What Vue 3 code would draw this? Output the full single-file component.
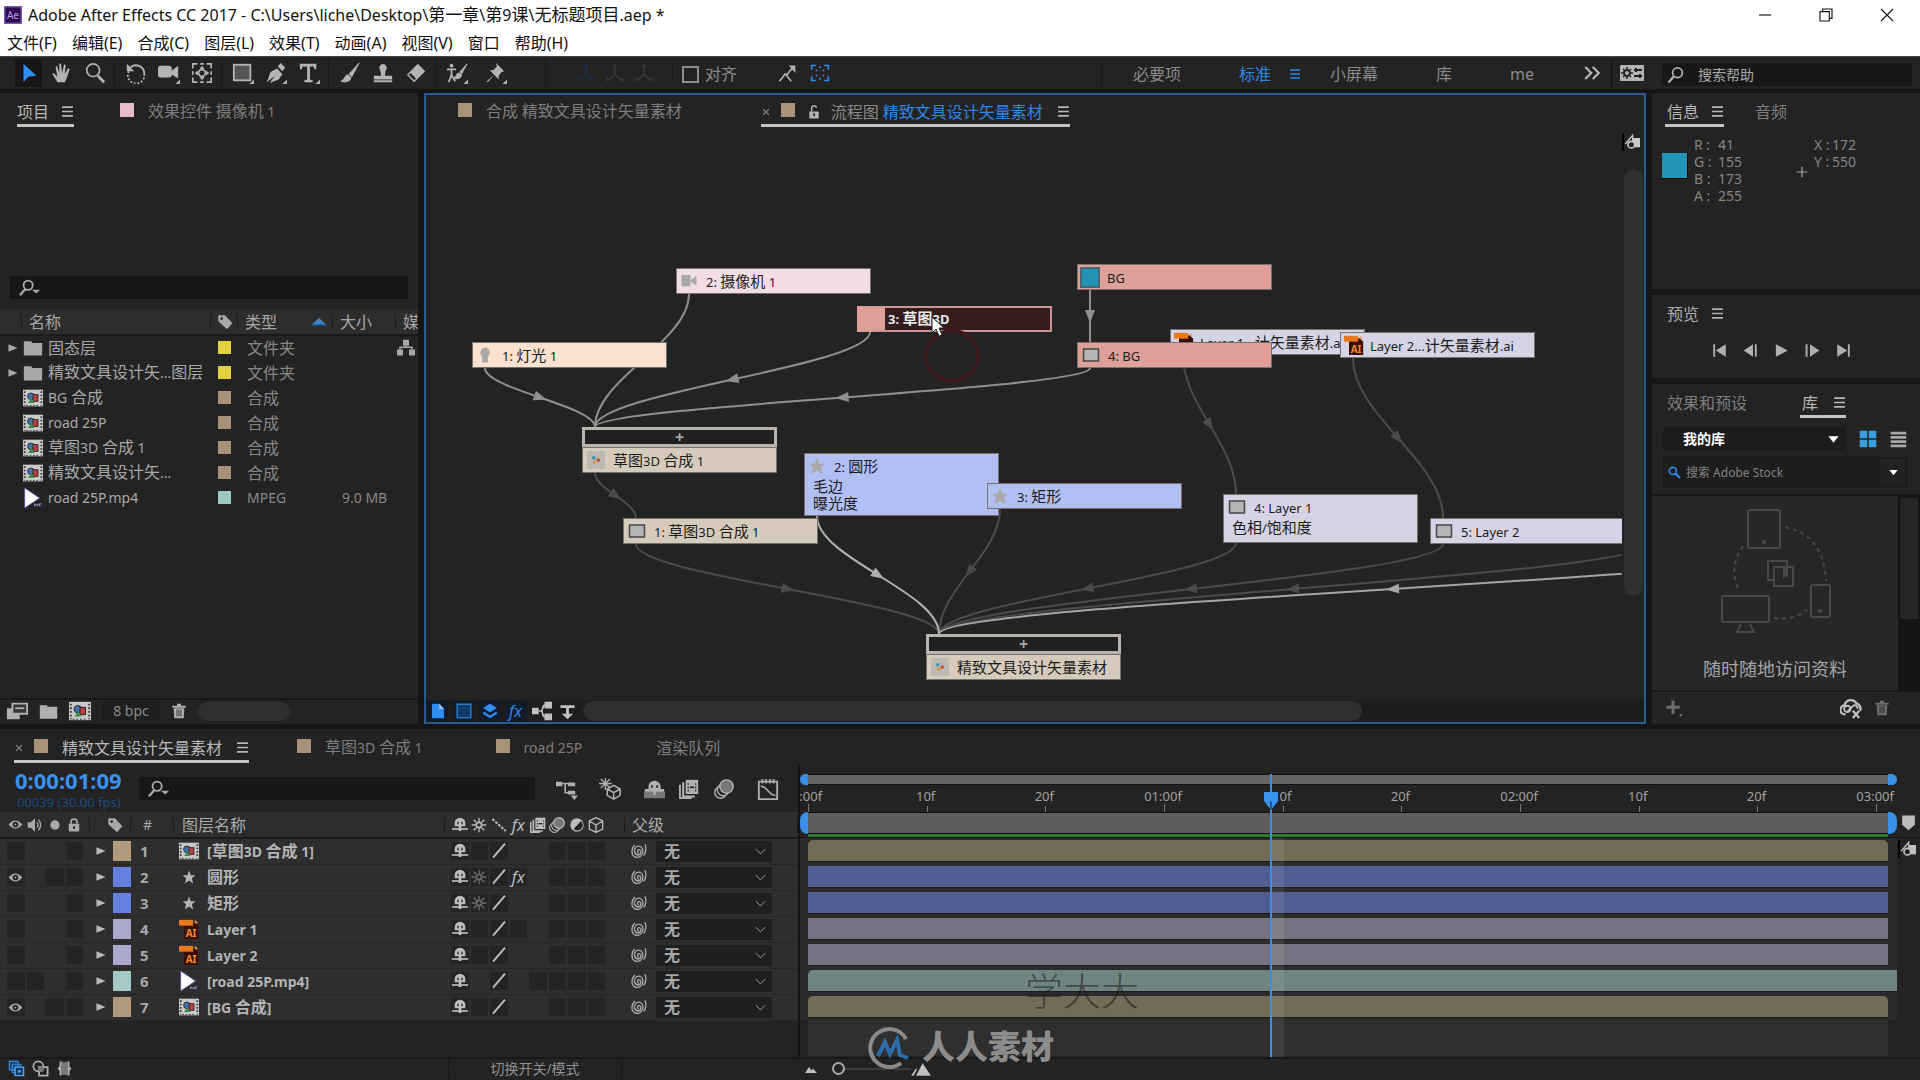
<script setup>
import { h } from 'vue'

const film = '<rect x="0" y="2" width="24" height="20" fill="#c9c9c9"/><path d="M2 4v17M22 4v17" stroke="#333" stroke-width="2" stroke-dasharray="2 2"/><path d="M4 21h16" stroke="#333" stroke-dasharray="2 2"/><circle cx="9.500" cy="10" r="4" fill="#3f74ad" stroke="#222"/><rect x="12" y="8" width="6" height="8" fill="#b5403c" stroke="#222"/><path d="M6 18l4-6 4 6z" fill="#3c8a4d"/>'
const shapes = {
  ae: '<rect width="24" height="24" fill="#7a55b5"/><rect x="2" y="2" width="20" height="20" fill="#2a0a4a"/>',
  arrow: '<path d="M6 2v20l5-6 9-1z" fill="#2f8df0"/>',
  hand: '<path d="M7 22L2 14c-1-2 1-3 2-1l3 3L5 6c0-2 2-2 2 0l2 6L9 3c0-2 2-2 2 0l1 9 2-8c0-2 2-1 2 0l-1 9 3-5c1-2 3-1 2 1l-3 9-2 4z" fill="currentColor"/>',
  zoom: '<circle cx="10" cy="9" r="7" fill="none" stroke="currentColor" stroke-width="1.800"/><path d="M15 15l7 7" stroke="currentColor" stroke-width="3"/>',
  rotate: '<path d="M6 6a9 9 0 0 1 15 7" fill="none" stroke="currentColor" stroke-width="2"/><path d="M21 13a9 9 0 1 1-16-4" fill="none" stroke="currentColor" stroke-width="2" stroke-dasharray="2 2"/><path d="M2 2v8h8z" fill="currentColor"/>',
  camera: '<rect x="0" y="4" width="15" height="13" rx="3" fill="currentColor"/><path d="M14 10l8-6v14l-8-5z" fill="currentColor"/><path d="M24 19v5h-5z" fill="currentColor"/>',
  cam: '<rect x="2" y="4" width="12" height="15" rx="1" fill="currentColor"/><path d="M14 11l8-6v13l-8-5z" fill="currentColor"/>',
  anchor: '<path d="M2 7V2h5M17 2h5v5M22 17v5h-5M7 22H2v-5M10 2h4M10 22h4M2 10v4M22 10v4" fill="none" stroke="currentColor" stroke-width="1.800"/><circle cx="12" cy="12" r="3.500" fill="none" stroke="currentColor" stroke-width="1.500"/><path d="M12 4l3 4H9zM12 20l3-4H9zM4 12l4-3v6zM20 12l-4-3v6z" fill="currentColor"/>',
  rect: '<rect x="2" y="3" width="18" height="17" fill="#555" stroke="currentColor" stroke-width="2"/><path d="M24 19v5h-5z" fill="currentColor"/>',
  pen: '<path d="M2 22l4-11 7-4 6 6-4 6-10 4 6-8z" fill="currentColor"/><path d="M14 5l3-4 5 5-3 4z" fill="currentColor"/><path d="M24 19v5h-5z" fill="currentColor"/>',
  type: '<path d="M2 2h18v6h-2l-1-3h-4v14l3 1v2H7v-2l3-1V5H5L4 8H2z" fill="currentColor"/><path d="M24 19v5h-5z" fill="currentColor"/>',
  brush: '<path d="M22 1L11 13l3 3zM10 14c-4 0-3 5-8 7 5 2 11 0 11-4z" fill="currentColor" stroke="currentColor"/>',
  stamp: '<path d="M9 9a4 4 0 1 1 6 0l-1 6h8v4H2v-4h8zM2 20h20v2H2z" fill="currentColor"/>',
  eraser: '<path d="M14 2l8 8-12 12-8-8z" fill="currentColor"/><path d="M6 12l6 6-2 2-6-6z" fill="#232323"/>',
  roto: '<circle cx="6" cy="4" r="2" fill="currentColor"/><path d="M1 8h10M6 7v7l-3 8M6 14l4 7" fill="none" stroke="currentColor" stroke-width="2"/><path d="M23 2l-8 9 2 2zM14 12c-3 0-2 4-6 6 4 1 9 0 9-4z" fill="currentColor" stroke="currentColor"/><path d="M24 19v5h-5z" fill="currentColor"/>',
  pin: '<path d="M12 1l9 9-3 1-3 4v4l-5-5-7 8-1-1 8-7-5-5h4l4-4z" fill="currentColor"/><path d="M24 19v5h-5z" fill="currentColor"/>',
  axis: '<path d="M12 2v12l-9 7M12 14l9 7" fill="none" stroke="currentColor" stroke-width="2"/><path d="M12 0l3 5H9zM1 22l2-5 3 4zM23 22l-5-1 3-4z" fill="currentColor"/>',
  snap: '<path d="M3 22l7-9 7 9M12 14l7-9" fill="none" stroke="currentColor" stroke-width="2"/><path d="M14 3h8v9z" fill="currentColor"/>',
  focus: '<path d="M2 8V3h5M17 3h5v5M22 16v5h-5M7 21H2v-5" fill="none" stroke="currentColor" stroke-width="2"/><path d="M7 8h2v2H7zM15 8h2v2h-2zM7 14h2v2H7zM15 14h2v2h-2zM11 4h2v2h-2zM11 18h2v2h-2z" fill="currentColor"/>',
  menu: '<path d="M2 4h20M2 12h20M2 20h20" stroke="currentColor" stroke-width="3"/>',
  more: '<path d="M3 4l8 8-8 8M13 4l8 8-8 8" fill="none" stroke="currentColor" stroke-width="3"/>',
  settings: '<rect x="0" y="4" width="24" height="16" rx="1" fill="currentColor"/><circle cx="7" cy="12" r="3" fill="none" stroke="#222" stroke-width="2"/><path d="M7 6v2M7 16v2M1 12h2M11 12h2M3 8l1 1M10 15l1 1M3 16l1-1M10 9l1-1" stroke="#222" stroke-width="1.500"/><path d="M14 9h8M14 15h8M16 7v4M20 13v4" stroke="#222" stroke-width="2"/>',
  find: '<circle cx="14" cy="9" r="6.500" fill="none" stroke="currentColor" stroke-width="2.200"/><path d="M9 14l-7 8" stroke="currentColor" stroke-width="3"/>',
  findDown: '<circle cx="10" cy="9" r="5" fill="none" stroke="currentColor" stroke-width="2"/><path d="M7 13l-6 7" stroke="currentColor" stroke-width="2.500"/><path d="M14 14h9l-4 4z" fill="currentColor"/>',
  lens: '<circle cx="9" cy="9" r="6.500" fill="none" stroke="currentColor" stroke-width="3"/><path d="M14 14l8 8" stroke="currentColor" stroke-width="4"/>',
  min: '<path d="M3 12h18" stroke="currentColor" stroke-width="1.700"/>',
  restore: '<path d="M3 7h14v14H3zM7 7V3h14v14h-4" fill="none" stroke="currentColor" stroke-width="1.700"/>',
  close: '<path d="M3 3l18 18M21 3L3 21" stroke="currentColor" stroke-width="1.700"/>',
  x: '<path d="M5 5l14 14M19 5L5 19" stroke="currentColor" stroke-width="3"/>',
  unlock: '<rect x="4" y="11" width="16" height="12" rx="1" fill="currentColor"/><path d="M8 11V6a4 4 0 0 1 8-1" fill="none" stroke="currentColor" stroke-width="2.500"/><path d="M12 14v5" stroke="#222" stroke-width="3"/>',
  lock: '<rect x="3" y="10" width="18" height="13" rx="1" fill="currentColor"/><path d="M7 10V6a5 4 0 0 1 10 0v4" fill="none" stroke="currentColor" stroke-width="3"/><path d="M12 14v5" stroke="#222" stroke-width="3"/>',
  tag: '<path d="M2 2h10l11 12-8 9L2 11z" fill="currentColor"/><circle cx="7" cy="7" r="2" fill="#2d2d2d"/>',
  up: '<path d="M1 16L12 6l11 10z" fill="#3f82c8"/><path d="M1 16h22v2H1z" fill="#164a86"/>',
  right: '<path d="M1 3l22 9L1 21z" fill="currentColor"/>',
  down: '<path d="M1 5h22L12 19z" fill="currentColor"/>',
  folder: '<path d="M1 4h9l1 2h12v15H1z" fill="currentColor"/>',
  comp: film,
  net: '<path d="M8 1h8v8H8zM0 14h8v8H0zM16 14h8v8h-8z" fill="currentColor"/><path d="M12 9v3M4 14v-3h16v3" fill="none" stroke="currentColor" stroke-width="2"/>',
  movie: '<path d="M2 0l18 12L2 24z" fill="#fff" stroke="#5b4fa8"/><path d="M13 18h11v5H13z" fill="#252540"/><path d="M14 22v-3l2 2 2-2v3M20 22v-3h2" stroke="#bbb" fill="none"/>',
  footage: '<path d="M1 9h14v12H1z" fill="currentColor"/><path d="M7 4h16v11H7z" fill="#333" stroke="currentColor" stroke-width="2"/><path d="M10 9h10" stroke="currentColor" stroke-width="2"/>',
  trash: '<path d="M2 4h20v3H2zM9 1h6v3H9z" fill="currentColor"/><path d="M4 8h16l-1 15H5z" fill="currentColor"/><path d="M9 10v10M12 10v10M15 10v10" stroke="#222" stroke-width="1.300"/>',
  page: '<path d="M3 1h11l7 8v14H3z" fill="#2f8df0"/><path d="M14 1v8h7z" fill="#9cc8f8"/>',
  square: '<rect x="3" y="3" width="18" height="18" fill="#123a68" stroke="#2b78c8" stroke-width="2"/>',
  stack: '<path d="M12 2l9 6-9 6-9-6z" fill="#2f8df0"/><path d="M3 14l9 6 9-6" fill="none" stroke="#2f8df0" stroke-width="3"/>',
  flow: '<path d="M0 8h8v8H0zM15 1h9v8h-9zM15 15h9v8h-9z" fill="currentColor"/><path d="M8 12h3c3 0 0-7 5-7M11 12c3 0 0 7 5 7" fill="none" stroke="currentColor" stroke-width="2"/>',
  tree: '<path d="M2 3h20v4H2zM4 15h16l-8 8zM10 7h4v10h-4z" fill="currentColor"/>',
  marker: '<path d="M13 6h11v14H13z" fill="currentColor"/><path d="M2 15L13 2v8" fill="none" stroke="currentColor" stroke-width="2"/><circle cx="11" cy="16" r="5" fill="#222" stroke="currentColor" stroke-width="2.500"/>',
  shield: '<path d="M3 2h18v13l-9 8-9-8z" fill="currentColor"/>',
  first: '<path d="M2 2h3v20H2zM22 2v20L6 12z" fill="currentColor"/>',
  prev: '<path d="M19 2h3v20h-3zM16 2v20L1 12z" fill="currentColor"/>',
  play: '<path d="M3 2l19 10L3 22z" fill="currentColor"/>',
  next: '<path d="M1 2h3v20H1zM8 2l15 10L8 22z" fill="currentColor"/>',
  last: '<path d="M19 2h3v20h-3zM2 2l16 10L2 22z" fill="currentColor"/>',
  grid: '<path d="M1 1h10v10H1zM13 1h10v10H13zM1 13h10v10H1zM13 13h10v10H13z" fill="#3aa0dc"/>',
  list: '<path d="M1 1h22v4H1zM1 7h22v4H1zM1 13h22v4H1zM1 19h22v4H1z" fill="currentColor"/>',
  plus: '<path d="M10 2h4v7h7v4h-7v7h-4v-7H3V9h7zM21 20h3v3h-3z" fill="currentColor"/>',
  cross: '<path d="M12 3v18M3 12h18" stroke="currentColor" stroke-width="2"/>',
  cloud: '<path d="M6 19a5 5 0 0 1-1-10 7 7 0 0 1 13-2 6 6 0 0 1 4 8" fill="none" stroke="currentColor" stroke-width="2.500"/><circle cx="8" cy="13" r="3.500" fill="none" stroke="currentColor" stroke-width="2"/><path d="M8 16l6-6a3 3 0 0 1 5 3" fill="none" stroke="currentColor" stroke-width="2"/><path d="M14 15l7 8M21 15l-7 8" stroke="currentColor" stroke-width="2.500"/>',
  miniflow: '<path d="M0 4h7v5H0zM13 5h8v4h-8zM13 14h8v4h-8zM16 19h8l-4 5z" fill="currentColor"/><path d="M7 6h7M10 6v10h4" fill="none" stroke="currentColor" stroke-width="1.700"/>',
  draft: '<path d="M7 0v13M0 6h14M2 1l10 10M12 1L2 11" stroke="currentColor" stroke-width="1.500"/><path d="M16 8l7 4v7l-7 4-7-4v-7zM9 12l7 4 7-4M16 16v7" fill="#222" stroke="currentColor" stroke-width="1.700"/>',
  shyAll: '<path d="M5 12V9a7 7 0 0 1 14 0v3z" fill="currentColor"/><path d="M0 14h24v8H0z" fill="#777"/><path d="M1 13h22M12 12v6" stroke="currentColor" stroke-width="3"/><path d="M8 7h2v3H8zM14 7h2v3h-2z" fill="#222"/>',
  shy: '<path d="M4 14V9a8 8 0 0 1 16 0v5h-6v7h-4v-7z" fill="currentColor"/><path d="M0 18h24" stroke="currentColor" stroke-width="2.500"/><path d="M8 7h2v4H8zM14 7h2v4h-2z" fill="#222"/>',
  blend: '<path d="M8 1h15v17H8z" fill="currentColor"/><path d="M5 4v17h14M1 7v16h14" fill="none" stroke="currentColor" stroke-width="2.500"/><path d="M11 5v10M20 5v10" stroke="#222" stroke-width="1.500" stroke-dasharray="2 2"/><path d="M13 10h5" stroke="#222" stroke-width="2"/>',
  blur: '<circle cx="8" cy="16" r="7" fill="#222" stroke="currentColor" stroke-width="1.700"/><circle cx="11" cy="13" r="7" fill="#222" stroke="currentColor" stroke-width="1.700"/><circle cx="15" cy="9" r="8" fill="#777" stroke="currentColor" stroke-width="1.700"/>',
  graph: '<path d="M2 4h20v19H2z" fill="none" stroke="currentColor" stroke-width="2"/><path d="M4 9c8 0 8 10 16 10M6 1v5M10 1v5M14 1v5M18 1v5" fill="none" stroke="currentColor" stroke-width="1.700"/>',
  eye: '<path d="M1 12q11-13 22 0q-11 13-22 0z" fill="currentColor"/><circle cx="12" cy="12" r="4.500" fill="#222"/><circle cx="12" cy="12" r="1.500" fill="currentColor"/>',
  sound: '<path d="M1 8h5l6-6v20l-6-6H1z" fill="currentColor"/><path d="M15 8q3 4 0 8M17 4q7 8 0 16" fill="none" stroke="currentColor" stroke-width="2"/>',
  dot: '<circle cx="12" cy="12" r="8" fill="currentColor"/>',
  sun: '<circle cx="12" cy="12" r="4" fill="none" stroke="currentColor" stroke-width="2.500"/><path d="M12 1v6M12 17v6M1 12h6M17 12h6M4 4l4 4M16 16l4 4M20 4l-4 4M4 20l4-4" stroke="currentColor" stroke-width="2"/>',
  slashDots: '<path d="M2 3l20 18" stroke="currentColor" stroke-width="3" stroke-dasharray="4 2"/>',
  slash: '<path d="M3 22L21 1" stroke="currentColor" stroke-width="3"/>',
  adjust: '<circle cx="12" cy="12" r="10" fill="currentColor"/><path d="M18 6a8 8 0 0 1-11 12z" fill="#222"/>',
  cube: '<path d="M12 1l10 5v12l-10 5-10-5V6zM2 6l10 6 10-6M12 12v11" fill="none" stroke="currentColor" stroke-width="2"/>',
  star: '<path d="M12 1l3 8h8l-6 5 2 9-7-5-7 5 2-9-6-5h8z" fill="currentColor"/>',
  spiral: '<path d="M12 15c-3 0-3-5 0-5 4 0 4 7-1 8-6 0-8-8-3-12 5-3 10 0 10 6 0 7-6 11-12 9-6-3-6-13 0-18M21 2c2 6 2 12-2 17" fill="none" stroke="currentColor" stroke-width="2"/>',
  chevron: '<path d="M2 7l10 10L22 7" fill="none" stroke="currentColor" stroke-width="2"/>',
  layersBlue: '<path d="M2 2h12v12H2zM6 6h12v12H6z" fill="#123a68" stroke="#3f8fe0" stroke-width="1.700"/><path d="M10 10h12v12H10z" fill="#123a68" stroke="#5aa8f0" stroke-width="2"/><circle cx="16" cy="16" r="2" fill="#5aa8f0"/>',
  modes: '<circle cx="9" cy="9" r="7" fill="none" stroke="currentColor" stroke-width="2.500"/><path d="M10 10h12v12H10z" fill="#222" stroke="currentColor" stroke-width="2.500"/><circle cx="13" cy="13" r="4" fill="#777"/>',
  braces: '<path d="M8 2H5v7l-3 3 3 3v7h3zM16 2h3v7l3 3-3 3v7h-3z" fill="currentColor"/><path d="M8 3h8v18H8z" fill="#777"/>',
  mount: '<path d="M0 20l8-12 5 7 3-4 8 9z" fill="currentColor"/>',
  mounts: '<path d="M6 20L14 5l10 15zM0 20l6-9 1 2-4 7z" fill="currentColor"/>',
  bulb: '<path d="M12 2a7 7 0 0 0-4 12v8h8v-8a7 7 0 0 0-4-12z" fill="currentColor"/>',
  solid: '<rect x="2" y="4" width="20" height="16" fill="#b4b4b4" stroke="#444" stroke-width="2"/>',
  compDot: '<rect width="24" height="24" fill="#bdb9b2"/><circle cx="9" cy="9" r="2.500" fill="#3f9bb0"/><circle cx="15" cy="12" r="2.500" fill="#c8503c"/><circle cx="10" cy="15" r="2" fill="#d8952c"/>'
}
const Ico = (p) => h('svg', { viewBox: '0 0 24 24', width: p.s || 20, height: p.s || 20, 'aria-hidden': 'true', innerHTML: shapes[p.n] })
Ico.props = ['n', 's']

// Latin runs are set one step smaller than the Chinese glyphs around them.
const Txt = (p) =>
  h('span', { class: 'runs' }, p.t.split(/([\x20-\x7e]+)/).filter(Boolean).map((r) => (/^[\x20-\x7e]/.test(r) ? h('span', { class: 'lat' }, r) : r)))
Txt.props = ['t']

const Ai = () => h('svg', { viewBox: '0 0 24 24', width: 20, height: 22, 'aria-hidden': 'true' }, [
  h('path', { d: 'M6 4h13l4 4v16H6z', fill: '#3a0f05' }),
  h('path', { d: 'M0 1h17v7H0z', fill: '#e8791d' }),
  h('path', { d: 'M19 1l4 4h-4z', fill: '#e8a060' }),
  h('text', { x: 8, y: 21, 'font-size': 12, 'font-weight': 700, fill: '#f08a2c' }, 'AI')
])

const menus = ['文件(F)', '编辑(E)', '合成(C)', '图层(L)', '效果(T)', '动画(A)', '视图(V)', '窗口', '帮助(H)']
const toolGroups = [
  ['arrow', 'hand', 'zoom'],
  ['rotate', 'camera', 'anchor'],
  ['rect', 'pen', 'type'],
  ['brush', 'stamp', 'eraser'],
  ['roto', 'pin']
]
const items = [
  { icon: 'folder', name: '固态层', color: '#e3d23f', type: '文件夹', size: '', twist: true },
  { icon: 'folder', name: '精致文具设计矢...图层', color: '#e3d23f', type: '文件夹', size: '', twist: true },
  { icon: 'comp', name: 'BG 合成', color: '#a8937a', type: '合成', size: '' },
  { icon: 'comp', name: 'road 25P', color: '#a8937a', type: '合成', size: '' },
  { icon: 'comp', name: '草图3D 合成 1', color: '#a8937a', type: '合成', size: '' },
  { icon: 'comp', name: '精致文具设计矢...', color: '#a8937a', type: '合成', size: '' },
  { icon: 'movie', name: 'road 25P.mp4', color: '#9fc8c0', type: 'MPEG', size: '9.0 MB' }
]

const nodes = [
  { x: 250, y: 138, h: 26, kind: 'pink', icon: 'cam', t: '2: 摄像机 1', pad: 1 },
  { x: 431, y: 176, h: 26, kind: 'editing', t: '3: 草图3D' },
  { x: 46, y: 212, h: 26, kind: 'peach', icon: 'bulb', t: '1: 灯光 1', pad: 1 },
  { x: 156, y: 317, h: 26, kind: 'tan', icon: 'compDot', t: '草图3D 合成 1', slot: 1 },
  { x: 197, y: 388, h: 26, kind: 'tan', icon: 'solid', t: '1: 草图3D 合成 1' },
  { x: 378, y: 323, h: 63, kind: 'blue', icon: 'star', t: '2: 圆形', pad: 1, fx: ['毛边', '曝光度'] },
  { x: 561, y: 353, h: 26, kind: 'blue', icon: 'star', t: '3: 矩形', pad: 1 },
  { x: 651, y: 134, h: 26, kind: 'red', icon: 'bg', t: 'BG' },
  { x: 744, y: 199, h: 26, kind: 'lav', icon: 'ai', t: 'Layer 1...计矢量素材.ai' },
  { x: 914, y: 202, h: 26, kind: 'lav', icon: 'ai', t: 'Layer 2...计矢量素材.ai' },
  { x: 651, y: 212, h: 26, kind: 'red', icon: 'solid', t: '4: BG' },
  { x: 797, y: 364, h: 49, kind: 'lav', icon: 'solid', t: '4: Layer 1', fx: ['色相/饱和度'] },
  { x: 1004, y: 388, h: 26, kind: 'lav', icon: 'solid', t: '5: Layer 2' },
  { x: 500, y: 524, h: 26, kind: 'tan', icon: 'compDot', t: '精致文具设计矢量素材', slot: 1 }
]
const dim = '#4b4b4b'
const mid = '#8f8f8f'
const edges = [
  [59, 238, 169, 297, mid], [263, 164, 169, 297, mid], [444, 202, 169, 297, mid], [664, 238, 169, 297, mid],
  [169, 343, 210, 388, dim], [210, 414, 513, 504, dim], [574, 379, 513, 504, dim],
  [810, 413, 513, 504, dim], [1017, 414, 513, 504, dim], [1221, 414, 513, 504, dim],
  [1421, 414, 513, 504, '#a5a5a5'], [391, 386, 513, 504, '#b0b0b0'],
  [664, 160, 664, 212, mid], [757, 225, 810, 364, dim], [927, 228, 1017, 388, dim]
].map(([x1, y1, x2, y2, c]) => {
  const k = (y2 - y1) * 0.36
  const a = (Math.atan2(y2 - y1 - k, x2 - x1) * 180) / Math.PI
  return { c, d: `M${x1} ${y1}C${x1} ${y1 + k} ${x2} ${y2 - k} ${x2} ${y2}`, t: `translate(${(x1 + x2) / 2} ${(y1 + y2) / 2}) rotate(${a})` }
})

const layers = [
  { av: 'b--b', color: '#b09c7c', icon: 'comp', name: '[草图3D 合成 1]', sw: 'sb/--bbb', bar: 'tan' },
  { av: 'e-bb', color: '#6680e0', icon: 'star', name: '圆形', sw: 'so/f-bbb', bar: 'blue' },
  { av: 'b--b', color: '#6680e0', icon: 'star', name: '矩形', sw: 'so/--bbb', bar: 'blue' },
  { av: 'b--b', color: '#aaa9cb', icon: 'ai', name: 'Layer 1', sw: 'sb/b-bbb', bar: 'lav' },
  { av: 'b--b', color: '#aaa9cb', icon: 'ai', name: 'Layer 2', sw: 'sb/--bbb', bar: 'lav' },
  { av: 'bb-b', color: '#a5c9c6', icon: 'movie', name: '[road 25P.mp4]', sw: 's-/-bbbb', bar: 'teal' },
  { av: 'e-bb', color: '#b09c7c', icon: 'comp', name: '[BG 合成]', sw: 'sb/--bbb', bar: 'tan' }
]
const switchIcon = { s: 'shy', o: 'sun', '/': 'slash', e: 'eye' }
const ticks = ['0:00f', '10f', '20f', '01:00f', '10f', '20f', '02:00f', '10f', '20f', '03:00f']
const playhead = (39 / 91) * 100
const transport = [['first', '第一帧'], ['prev', '上一帧'], ['play', '播放'], ['next', '下一帧'], ['last', '最后一帧']]
</script>

<template>
  <div class="app">
    <header class="title">
      <span class="logo"><Ico n="ae" s="18" /><b>Ae</b></span>
      <h1><Txt t="Adobe After Effects CC 2017 - C:\Users\liche\Desktop\第一章\第9课\无标题项目.aep *" /></h1>
      <div class="win">
        <button aria-label="最小化"><Ico n="min" s="16" /></button>
        <button aria-label="还原"><Ico n="restore" s="16" /></button>
        <button aria-label="关闭"><Ico n="close" s="16" /></button>
      </div>
    </header>
    <nav class="menus"><button v-for="m in menus" :key="m">{{ m }}</button></nav>

    <div class="tools">
      <div v-for="(g, i) in toolGroups" :key="i" class="group">
        <button v-for="t in g" :key="t" :class="['tool', t]" :aria-label="t"><Ico :n="t" s="22" /></button>
      </div>
      <div class="axes"><Ico n="axis" s="20" class="first" /><Ico n="axis" s="20" /><Ico n="axis" s="20" /></div>
      <label class="snap"><input type="checkbox" />对齐</label>
      <button class="tool" aria-label="吸附边缘"><Ico n="snap" s="20" /></button>
      <button class="tool on" aria-label="吸附范围"><Ico n="focus" s="20" /></button>
      <div class="spaces">
        <button>必要项</button>
        <button class="on">标准</button>
        <Ico n="menu" s="12" class="on burger" />
        <button>小屏幕</button>
        <button>库</button>
        <button class="lat">me</button>
      </div>
      <Ico n="more" s="18" class="more" />
      <button class="settings" aria-label="设置"><Ico n="settings" s="24" /></button>
      <label class="help"><Ico n="find" s="18" /><input type="search" placeholder="搜索帮助" aria-label="搜索帮助" /></label>
    </div>

    <main class="main">
      <section class="panel project">
        <div class="tabs">
          <a href="#project" class="tab active">项目<Ico n="menu" s="13" class="burger" /></a>
          <a href="#effects" class="tab fxtab"><i class="sw pinksw"></i><Txt t="效果控件 摄像机 1" /></a>
        </div>
        <div class="preview"></div>
        <label class="search"><Ico n="findDown" s="22" /><input type="search" aria-label="搜索项目" /></label>
        <table class="files">
          <colgroup><col class="f1" /><col class="f2" /><col class="f3" /><col class="f4" /><col class="f5" /><col /></colgroup>
          <thead>
            <tr><th></th><th>名称</th><th class="ctr"><Ico n="tag" s="16" /></th><th><span class="sort">类型<Ico n="up" s="16" /></span></th><th>大小</th><th>媒</th></tr>
          </thead>
          <tbody>
            <tr v-for="(f, i) in items" :key="i">
              <td><Ico v-if="f.twist" n="right" s="10" class="twist" /></td>
              <td><span class="fname"><Ico :n="f.icon" s="20" /><Txt :t="f.name" /></span></td>
              <td class="ctr"><i class="sw small" :style="{ background: f.color }"></i></td>
              <td class="dimtext"><Txt :t="f.type" /></td>
              <td class="dimtext"><Txt :t="f.size" /></td>
              <td><Ico v-if="i === 0" n="net" s="18" class="net" /></td>
            </tr>
          </tbody>
        </table>
        <div class="fill"></div>
        <div class="pfoot">
          <button aria-label="解释素材"><Ico n="footage" s="22" /></button>
          <button aria-label="新建文件夹"><Ico n="folder" s="19" /></button>
          <button aria-label="新建合成"><Ico n="comp" s="22" /></button>
          <button class="bpc">8 bpc</button>
          <button aria-label="删除"><Ico n="trash" s="16" /></button>
          <div class="thumb"></div>
        </div>
      </section>

      <section class="panel viewer">
        <div class="tabs">
          <a href="#comp" class="tab"><i class="sw tansw"></i><Txt t="合成 精致文具设计矢量素材" /></a>
          <a href="#flow" class="tab active flowtab">
            <Ico n="x" s="10" class="shut" /><i class="sw tansw"></i><Ico n="unlock" s="14" />
            <span><span class="grey">流程图</span> <span class="on">精致文具设计矢量素材</span></span><Ico n="menu" s="13" class="burger" />
          </a>
        </div>
        <div class="stage">
          <div class="canvas">
            <svg class="wires" aria-hidden="true">
              <g v-for="(e, i) in edges" :key="i">
                <path :d="e.d" :stroke="e.c" fill="none" stroke-width="2" />
                <path d="M-6 -5L7 0L-6 5z" :fill="e.c" :transform="e.t" />
              </g>
            </svg>
            <div v-for="(n, i) in nodes" :key="i" :class="['node', n.kind]" :style="{ left: n.x + 'px', top: n.y + 'px', height: n.h + 'px' }">
              <div v-if="n.slot" class="slot"><b>+</b></div>
              <div v-if="n.kind === 'editing'" class="edit"><Txt :t="n.t" /></div>
              <template v-else>
                <div :class="['nrow', n.icon, { wide: n.pad }]">
                  <Ai v-if="n.icon === 'ai'" /><i v-else-if="n.icon === 'bg'" class="bgsw"></i><Ico v-else :n="n.icon" s="18" />
                  <Txt :t="n.t" />
                </div>
                <div v-for="f in n.fx" :key="f" class="fx"><Txt :t="f" /></div>
              </template>
            </div>
            <div class="ripple"></div>
            <svg class="cursor" viewBox="0 0 14 22" width="14" height="22" aria-hidden="true"><path d="M1 1v16l4-4 3 7 3-1-3-7h5z" fill="#fff" stroke="#222" /></svg>
          </div>
          <div class="vside"><Ico n="marker" s="18" class="mk" /><div class="vthumb"></div></div>
        </div>
        <div class="vfoot">
          <button class="lit" aria-label="素材"><Ico n="page" s="16" /></button>
          <button class="lit" aria-label="固态"><Ico n="square" s="18" /></button>
          <button class="lit" aria-label="图层"><Ico n="stack" s="18" /></button>
          <button class="lit fxi">fx</button>
          <button aria-label="连线"><Ico n="flow" s="20" /></button>
          <button aria-label="方向"><Ico n="tree" s="17" /></button>
          <div class="thumb"></div>
        </div>
      </section>

      <div class="side">
        <section class="panel info">
          <div class="tabs">
            <a href="#info" class="tab active">信息<Ico n="menu" s="13" class="burger" /></a>
            <a href="#audio" class="tab">音频</a>
          </div>
          <div class="readout">
            <i class="chip"></i>
            <dl><dt>R :</dt><dd>41</dd><dt>G :</dt><dd>155</dd><dt>B :</dt><dd>173</dd><dt>A :</dt><dd>255</dd></dl>
            <Ico n="cross" s="14" class="crosshair" />
            <dl class="xy"><dt>X :</dt><dd>172</dd><dt>Y :</dt><dd>550</dd></dl>
          </div>
        </section>
        <section class="panel prev">
          <div class="tabs"><a href="#preview" class="tab bright">预览<Ico n="menu" s="13" class="burger" /></a></div>
          <div class="transport"><button v-for="t in transport" :key="t[0]" :aria-label="t[1]"><Ico :n="t[0]" s="15" /></button></div>
        </section>
        <section class="panel library">
          <div class="tabs">
            <a href="#presets" class="tab">效果和预设</a>
            <a href="#library" class="tab active libtab">库<Ico n="menu" s="13" class="burger" /></a>
          </div>
          <div class="libtop">
            <label class="libsel"><select aria-label="库"><option>我的库</option></select><Ico n="down" s="11" /></label>
            <button aria-label="网格"><Ico n="grid" s="18" /></button>
            <button aria-label="列表"><Ico n="list" s="17" /></button>
          </div>
          <label class="stock"><Ico n="lens" s="13" class="on" /><input type="search" placeholder="搜索 Adobe Stock" aria-label="搜索 Adobe Stock" /><span><Ico n="down" s="9" /></span></label>
          <div class="libbody">
            <div class="empty">
              <svg viewBox="0 0 120 130" width="120" height="130" fill="none" stroke="#484848" stroke-width="2" aria-hidden="true">
                <rect x="33" y="3" width="32" height="38" rx="2" /><circle cx="49" cy="35" r="1" />
                <rect x="96" y="78" width="19" height="32" rx="2" /><circle cx="105" cy="104" r="1" />
                <rect x="7" y="89" width="47" height="26" rx="2" /><path d="M26 117l-4 8h17l-4-8" />
                <rect x="53" y="54" width="19" height="19" /><rect x="59" y="60" width="19" height="19" fill="#272727" /><path d="M68 60h5v12l-2-3-3 3z" fill="#484848" stroke="none" />
                <path d="M70 20q39 8 41 54M28 39Q13 60 24 83M59 111q18 3 33-8" stroke-dasharray="4 4" />
              </svg>
              <p>随时随地访问资料</p>
            </div>
            <div class="lscroll"><div></div></div>
          </div>
          <div class="libfoot">
            <button aria-label="添加"><Ico n="plus" s="18" /></button>
            <button class="cloud" aria-label="同步"><Ico n="cloud" s="22" /></button>
            <button aria-label="删除"><Ico n="trash" s="16" /></button>
          </div>
        </section>
      </div>
    </main>

    <section class="timeline">
      <div class="tabs">
        <a href="#t1" class="tab active t1"><Ico n="x" s="10" class="shut" /><i class="sw tansw"></i>精致文具设计矢量素材<Ico n="menu" s="13" class="burger" /></a>
        <a href="#t2" class="tab t2"><i class="sw tansw"></i><Txt t="草图3D 合成 1" /></a>
        <a href="#t3" class="tab t3"><i class="sw tansw"></i><Txt t="road 25P" /></a>
        <a href="#t4" class="tab t4">渲染队列</a>
      </div>
      <div class="tbody">
        <div class="left">
          <div class="controls">
            <div class="time"><strong>0:00:01:09</strong><small>00039 (30.00 fps)</small></div>
            <label class="search tsearch"><Ico n="findDown" s="22" /><input type="search" aria-label="搜索图层" /></label>
            <div class="tbtns">
              <button aria-label="合成微型流程图"><Ico n="miniflow" s="22" /></button>
              <button aria-label="草图 3D"><Ico n="draft" s="22" /></button>
              <button aria-label="消隐"><Ico n="shyAll" s="21" /></button>
              <button aria-label="帧混合"><Ico n="blend" s="20" /></button>
              <button aria-label="运动模糊"><Ico n="blur" s="20" /></button>
              <button aria-label="图表编辑器"><Ico n="graph" s="22" /></button>
            </div>
          </div>
          <table class="layers">
            <colgroup><col class="l1" /><col class="l2" /><col class="l3" /><col class="l4" /><col class="l5" /><col /></colgroup>
            <thead>
              <tr>
                <th><div class="av"><span><Ico n="eye" s="15" /></span><span><Ico n="sound" s="16" /></span><span><Ico n="dot" s="14" /></span><span><Ico n="lock" s="14" /></span></div></th>
                <th><Ico n="tag" s="16" class="ltag" /></th>
                <th class="hash"><span class="lat">#</span></th>
                <th>图层名称</th>
                <th><div class="switches"><span v-for="s in ['shy', 'sun', 'slashDots', 'fx', 'blend', 'blur', 'adjust', 'cube']" :key="s"><em v-if="s === 'fx'">fx</em><Ico v-else :n="s" s="16" /></span></div></th>
                <th>父级</th>
              </tr>
            </thead>
            <tbody>
              <tr v-for="(l, i) in layers" :key="i">
                <td><div class="av"><span v-for="(c, j) in l.av" :key="j" :class="{ box: c !== '-' }"><Ico v-if="c === 'e'" n="eye" s="15" /></span></div></td>
                <td><div class="lab"><Ico n="right" s="10" /><i :style="{ background: l.color }"></i></div></td>
                <td class="num">{{ i + 1 }}</td>
                <td><div class="lname"><span class="lic"><Ai v-if="l.icon === 'ai'" /><Ico v-else :n="l.icon" :s="l.icon === 'star' ? 14 : 20" /></span><Txt :t="l.name" /></div></td>
                <td><div class="switches"><span v-for="(c, j) in l.sw" :key="j" :class="{ box: c !== '-', faint: c === 'o' }"><em v-if="c === 'f'">fx</em><Ico v-else-if="switchIcon[c]" :n="switchIcon[c]" s="16" /></span></div></td>
                <td><div class="parent"><Ico n="spiral" s="16" /><label><select :aria-label="'父级 ' + (i + 1)"><option>无</option></select><Ico n="chevron" s="11" /></label></div></td>
              </tr>
            </tbody>
          </table>
        </div>
        <div class="right">
          <div class="scale nav"><b class="hl"></b><div class="bar"></div><b class="hr"></b></div>
          <div class="scale ruler"><span></span><div class="ticks"><div v-for="(t, i) in ticks" :key="i" :class="{ major: i % 3 === 0 }"><span>{{ t }}</span><i></i></div></div></div>
          <div class="scale work"><b class="hl"></b><div class="bar"></div><b class="hr"></b><Ico n="shield" s="17" class="sh" /></div>
          <div class="scale cache"><span></span><div></div></div>
          <div class="tracks">
            <div v-for="(l, i) in layers" :key="i" :class="['scale', 'track']"><span></span><div :class="['clip', l.bar]"></div></div>
            <div class="scale rest"><span></span><div></div></div>
            <Ico n="marker" s="18" class="tmk" />
          </div>
          <div class="scale overlay"><span></span><div><div class="head" :style="{ left: playhead + '%' }">
            <svg width="14" height="18" viewBox="0 0 14 18" aria-hidden="true"><path d="M0 0h14v9l-7 9-7-9z" fill="#3a92ee" /><path d="M7 9v9" stroke="#123" /></svg>
          </div></div></div>
        </div>
      </div>
      <div class="tfoot">
        <div class="tfl">
          <button aria-label="图层开关"><Ico n="layersBlue" s="17" /></button>
          <button aria-label="转换控制"><Ico n="modes" s="17" /></button>
          <button aria-label="入点出点"><Ico n="braces" s="17" /></button>
          <button class="toggle">切换开关/模式</button>
        </div>
        <div class="tfr"><Ico n="mount" s="12" /><i class="knob"></i><i class="rail"></i><Ico n="mounts" s="20" /></div>
      </div>
      <div class="mark1">学大大</div>
      <div class="mark2">
        <svg width="44" height="44" viewBox="0 0 44 44" aria-hidden="true">
          <path d="M38 14A19 19 0 1 0 33 38" fill="none" stroke="#8a8a8a" stroke-width="4" />
          <path d="M10 31l7-14 5 12 7-14 3 15 8 3" fill="none" stroke="#2c6ca8" stroke-width="4" />
        </svg>
        <span>人人素材</span>
      </div>
    </section>
  </div>
</template>

<style>
body { margin: 0; background: #151515; }
.lat { font-size: 14px; }
.node .lat { font-size: 13px; }
.title .lat { font-size: 16px; }
</style>

<style scoped>
* { box-sizing: border-box; }
.app {
  min-height: 100vh; display: flex; flex-direction: column; overflow: hidden;
  font: 16px/20px "Noto Sans", "Noto Sans CJK SC", sans-serif; color: #a8a8a8; background: #151515;
}
svg { display: block; flex: none; }
button, input, select { font: inherit; color: inherit; border: 0; padding: 0; margin: 0; background: none; outline: 0; appearance: none; }
button { display: flex; align-items: center; justify-content: center; white-space: nowrap; }
a { color: inherit; text-decoration: none; }
.on { color: #2f86e6; }
.runs { white-space: nowrap; }

.title { display: flex; align-items: center; height: 30px; background: #fff; color: #111; padding-left: 4px; }
.title h1 { margin: 0 0 0 6px; font-size: 17px; font-weight: 400; white-space: nowrap; flex: 1; }
.logo { display: grid; place-items: center; }
.logo > * { grid-area: 1 / 1; }
.logo b { font-size: 10px; line-height: 12px; color: #b79cf0; font-weight: 400; }
.win { display: flex; gap: 15px; padding-right: 10px; }
.win button { width: 46px; height: 28px; }
.menus { display: flex; gap: 15px; height: 27px; padding: 0 7px 1px; background: #fff; color: #111; border-bottom: 1px solid #444; }

.tools { display: flex; align-items: center; height: 32px; background: #232323; padding: 0 8px 0 12px; color: #b4b4b4; }
.group { display: flex; padding-right: 3px; margin-right: 4px; border-right: 1px solid #191919; }
.group:nth-child(5) { gap: 6px; padding-right: 33px; }
.tool { width: 33px; height: 28px; }
.tool.arrow { background: linear-gradient(#161616, #161616) center / 27px 28px no-repeat; }
.axes { display: flex; gap: 9px; padding: 0 18px 0 26px; color: #363636; border-right: 1px solid #191919; }
.axes .first { color: #1a2f4a; }
.snap { display: flex; align-items: center; gap: 6px; margin: 0 33px 0 9px; padding-top: 2px; white-space: nowrap; color: #8a8a8a; }
.snap input { width: 17px; height: 17px; border: 2px solid #8e8e8e; }
.spaces { display: flex; align-items: center; margin-left: auto; padding: 2px 0 0 31px; border-left: 1px solid #191919; height: 28px; color: #8a8a8a; }
.spaces button + button { margin-left: 58px; }
.spaces .burger { margin: 0 29px 0 18px; }
.spaces .on { color: #2f86e6; }
.more { margin: 0 10px 0 49px; }
.settings { padding: 0 18px 0 8px; border-left: 1px solid #111; height: 28px; }
.help { display: flex; align-items: center; gap: 13px; width: 250px; height: 23px; background: #171717; padding-left: 5px; border-radius: 2px; margin-top: 3px; }
.help input { flex: 1; min-width: 0; font-size: 14px; line-height: 20px; }
.help input::placeholder { color: #a8a8a8; opacity: 1; }

.main { display: flex; flex: 1; padding: 4px 0 5px; gap: 6px; }
.panel { background: #232323; display: flex; flex-direction: column; }
.tabs { display: flex; height: 36px; flex: none; color: #7d7d7d; }
.tab { display: flex; align-items: center; height: 34px; padding-top: 6px; white-space: nowrap; border-bottom: 3px solid transparent; }
.tab.active { color: #b8b8b8; border-color: #c4c4c4; }
.tab.bright { color: #b0b0b0; }
.burger { margin-left: 12px; }
.grey { color: #8a8a8a; }
.sw { width: 14px; height: 14px; flex: none; margin-right: 14px; align-self: flex-start; margin-top: 4px; }
.tansw { background: #a8937a; }
.pinksw { background: #e5bcc8; }
.project { width: 418px; flex: none; }
.project .tabs { padding-left: 17px; gap: 46px; }
.preview { height: 147px; }
.search { display: flex; align-items: center; height: 23px; background: #171717; padding-left: 9px; color: #a8a8a8; }
.search input { flex: 1; min-width: 0; }
.project .search { margin: 0 10px 10px; }
table { border-collapse: collapse; table-layout: fixed; width: 100%; }
th, td { padding: 0; font-weight: 400; text-align: left; white-space: nowrap; overflow: hidden; }
thead tr { background: #2d2d2d; height: 26px; }
th { border-bottom: 2px solid #1a1a1a; background: linear-gradient(#1c1c1c, #1c1c1c) right / 1px 16px no-repeat; }
.f1 { width: 22px; } .f2 { width: 189px; } .f3 { width: 27px; } .f4 { width: 95px; } .f5 { width: 63px; }
.files th { padding-left: 7px; }
.files th:first-child, .files th.ctr { padding-left: 6px; }
.files td { height: 25px; border-bottom: 1px solid #202020; }
.fname { display: flex; align-items: center; gap: 5px; padding-left: 1px; }
.twist { margin-left: 8px; }
.sw.small { display: block; width: 13px; height: 13px; margin: 0 7px; }
.dimtext { color: #888; padding-left: 9px; }
.sort { display: flex; justify-content: space-between; align-items: center; padding-right: 6px; }
.net { margin-left: 1px; }
.fill { flex: 1; }
.pfoot { display: flex; align-items: center; height: 24px; margin-bottom: 2px; border-top: 2px solid #181818; padding-left: 6px; gap: 11px; color: #b0b0b0; }
.pfoot .bpc { width: 58px; height: 20px; font-size: 14px; color: #8a8a8a; background: #1f1f1f; }
.pfoot .thumb { width: 92px; height: 19px; border-radius: 10px; background: #2f2f2f; }

.viewer { flex: 1; min-width: 0; border: 2px solid #2a5a92; }
.viewer .tabs { height: 35px; padding-left: 32px; gap: 79px; }
.viewer .tab { height: 32px; padding-top: 4px; }
.flowtab .sw { margin-right: 12px; }
.flowtab svg + span { margin-left: 10px; }
.shut { margin-right: 10px; color: #888; }
.flowtab .burger { margin-left: 14px; }
.stage { flex: 1; display: flex; min-height: 570px; }
.canvas { flex: 1; min-width: 0; position: relative; overflow: hidden; }
.wires { position: absolute; left: 0; top: 0; width: 100%; height: 100%; }
.node { position: absolute; width: 195px; border: 1px solid #77716c; font-size: 15px; line-height: 18px; color: #1c1c1c; }
.nrow { display: flex; align-items: center; height: 24px; gap: 8px; padding-left: 4px; color: #a9a9a9; }
.nrow .runs, .fx .runs { color: #1c1c1c; }
.nrow.wide { gap: 8px; padding-left: 3px; }
.nrow.ai { gap: 6px; padding-left: 3px; }
.fx { padding-left: 8px; line-height: 17px; }
.pink { background: #f3dde5; } .peach { background: #fbe1cf; } .tan { background: #d6cabc; }
.blue { background: #b2bff2; } .red { background: #e0a09a; } .lav { background: #d5d4e6; }
.bgsw { width: 20px; height: 21px; margin: 0 -1px 0 -2px; background: #2193b3; border: 2px solid #4d6670; }
.editing { background: #331c1b; border: 2px solid #c89590; border-left: 28px solid #e0a09a; }
.edit { line-height: 20px; color: #e8e8e8; font-weight: 700; padding-left: 3px; }
.slot { position: absolute; left: -1px; right: -1px; bottom: 25px; height: 20px; border: 3px solid #b9b5ae; background: #212121; display: flex; align-items: center; justify-content: center; color: #aaa; }
.slot b { font-size: 16px; line-height: 14px; }
.ripple { position: absolute; left: 498px; top: 199px; width: 56px; height: 54px; border: 4px solid #3a1a1d; border-radius: 50%; }
.cursor { position: absolute; left: 505px; top: 186px; }
.vside { width: 22px; padding-top: 3px; }
.mk { border-left: 2px solid #000; color: #c8c8c8; }
.vthumb { height: 427px; margin-top: 18px; width: 19px; background: #2f2f2f; border-radius: 10px; margin-left: 2px; }
.vfoot { display: flex; align-items: center; height: 22px; background: #1d1d1d; color: #c0c0c0; gap: 5px; padding-left: 1px; }
.vfoot button { width: 21px; height: 20px; }
.vfoot .lit { background: #101c2c; color: #2f86e6; }
.fxi { font-style: italic; }
.vfoot .thumb { height: 20px; width: 64%; border-radius: 10px; background: #2f2f2f; }

.side { width: 268px; flex: none; display: flex; flex-direction: column; gap: 6px; }
.side .tabs { padding-left: 13px; gap: 29px; }
.info { height: 196px; }
.info .burger, .prev .burger { margin-left: 12px; }
.side .tab { padding: 6px 0 0 2px; }
.readout { display: flex; padding: 7px 0 0 10px; font-size: 14px; color: #858585; }
.chip { width: 26px; height: 26px; margin: 17px 6px 0 0; background: #2396b7; border-right: 1px solid #000; border-bottom: 1px solid #000; }
dl { display: grid; grid-template-columns: 24px 30px; margin: 0; line-height: 17px; align-content: start; }
dd { margin: 0; }
.crosshair { margin: 29px 5px 0 47px; color: #aaa; }
.xy { grid-template-columns: 18px 30px; }
.prev { height: 83px; }
.transport { display: flex; justify-content: center; gap: 16px; padding: 12px 9px 0 0; color: #b0b0b0; }
.library { flex: 1; }
.side .libtab { margin-left: 24px; }
.libtab .burger { margin-left: 15px; }
.libtop { display: flex; align-items: center; gap: 13px; padding: 7px 0 0 11px; }
.libsel { display: flex; align-items: center; width: 183px; height: 24px; background: #1c1c1c; color: #fff; padding: 0 7px 0 20px; }
.libsel select { flex: 1; font-size: 14px; font-weight: 700; }
.stock { display: flex; align-items: center; height: 30px; margin: 6px 13px 0 11px; background: #1d1d1d; border: 1px solid #181818; padding: 1px 0 0 4px; gap: 5px; color: #fff; }
.stock input { flex: 1; min-width: 0; font-size: 12px; }
.stock input::placeholder { color: #808080; opacity: 1; }
.stock span { width: 26px; height: 27px; display: grid; place-items: center; background: #222; }
.libbody { display: flex; flex: 1; margin-top: 7px; border-top: 2px solid #191919; border-bottom: 2px solid #191919; }
.empty { flex: 1; background: #272727; display: flex; flex-direction: column; align-items: center; padding-top: 11px; }
.empty p { margin: 20px 0 0; font-size: 18px; line-height: 24px; color: #a5a5a5; }
.lscroll { width: 22px; background: #151515; padding: 2px 2px 0; }
.lscroll div { height: 121px; background: #252525; }
.libfoot { display: flex; align-items: center; height: 32px; padding: 0 30px 0 12px; gap: 12px; color: #6e6e6e; }
.cloud { margin-left: auto; color: #c0c0c0; }

.timeline { background: #232323; position: relative; }
.timeline .tabs { padding-left: 14px; }
.t1 .sw { margin-right: 14px; }
.t1 .burger { margin-left: 14px; }
.t2 { margin-left: 48px; } .t3 { margin-left: 73px; } .t4 { margin-left: 74px; }
.tbody { display: flex; }
.left { width: 800px; flex: none; border-right: 2px solid #141414; padding-bottom: 36px; }
.controls { display: flex; height: 47px; }
.time { width: 139px; padding: 2px 0 0 15px; white-space: nowrap; }
.time strong { display: block; font-size: 22px; line-height: 26px; color: #3a92f0; }
.time small { display: block; font-size: 13px; line-height: 18px; color: #1f4a80; padding-left: 2px; }
.tsearch { width: 396px; margin-top: 12px; }
.tbtns { display: flex; align-items: flex-start; padding: 12px 0 0 19px; gap: 12px; color: #b0b0b0; }
.tbtns button { width: 26px; height: 24px; }
.tbtns button:nth-child(2) { margin: 0 6px 0 5px; }
.tbtns button:nth-child(n + 4) { margin-left: -3px; }
.tbtns button:last-child { margin-left: 6px; }
.l1 { width: 90px; } .l2 { width: 41px; } .l3 { width: 43px; } .l4 { width: 271px; } .l5 { width: 180px; }
.layers td { height: 26px; background: #2e2e2e; border-bottom: 1px solid #262626; }
.layers th { color: #aaa; }
.layers th:nth-child(4) { padding-left: 8px; }
.layers th:last-child { padding-left: 7px; }
.layers .hash { padding-left: 12px; }
.av { display: grid; grid-template-columns: repeat(4, 1fr); width: 78px; margin-left: 6px; }
.av span, .switches span { height: 18px; display: grid; place-items: center; border: solid transparent; border-width: 0 1px; background-clip: padding-box; }
.box { background-color: #242424; }
.ltag { margin-left: 17px; }
.lab { display: flex; align-items: center; gap: 7px; padding-left: 6px; color: #b8b8b8; }
.lab i { width: 20px; height: 20px; }
.num { font-weight: 700; font-size: 15px; padding-left: 9px; }
.lname { display: flex; align-items: center; gap: 7px; padding-left: 4px; font-weight: 700; color: #b4b4b4; }
.lic { width: 22px; display: grid; place-items: center; }
.switches { display: grid; grid-template-columns: repeat(8, 1fr); width: 156px; margin-left: 5px; color: #bdbdbd; }
.switches em { font-size: 16px; line-height: 16px; }
.switches .faint { color: #6c6c6c; }
.parent { display: flex; align-items: center; gap: 9px; padding-left: 6px; }
.parent label { display: flex; align-items: center; width: 116px; height: 21px; background: #1f1f1f; padding: 0 6px 0 8px; }
.parent select { flex: 1; font-weight: 700; line-height: 20px; }

.right { flex: 1; min-width: 0; padding-top: 9px; position: relative; overflow: hidden; }
.scale { display: grid; grid-template-columns: 8px 1fr 9px 23px; }
.nav { height: 11px; }
.bar { background: #646464; border: solid #101010; border-width: 1px 0; }
.hl { background: #3a8fe8; border-radius: 8px 0 0 8px; }
.hr { background: #3a8fe8; border-radius: 0 8px 8px 0; }
.ruler { height: 27px; }
.ticks { display: grid; grid-template-columns: repeat(9, 10fr) 1fr; font-size: 13px; line-height: 18px; color: #a0a0a0; }
.ticks > div { display: flex; flex-direction: column; justify-content: space-between; min-width: 0; width: 0; padding-top: 2px; }
.ticks span { display: flex; justify-content: center; width: 0; margin-left: -1px; }
.ticks i { width: 1px; height: 6px; background: #777; }
.ticks .major i { height: 8px; margin-top: -2px; }
.work { height: 22px; }
.work .bar { background: #5e5e5e; }
.sh { justify-self: center; margin-top: 2px; color: #bbb; }
.cache { height: 4px; border-bottom: 1px solid #151515; }
.cache div { background: #2d7a30; }
.tracks { position: relative; }
.track { height: 26px; background: linear-gradient(90deg, #2b2b2b, #2b2b2b) left / calc(100% - 23px) 100% no-repeat; }
.clip { margin: 2px 0 3px; box-shadow: 0 1px 0 rgba(0, 0, 0, .35); }
.clip.tan { background: #746a58; border-radius: 5px 5px 0 0; }
.clip.blue { background: #525e91; } .clip.lav { background: #757382; }
.clip.teal { background: #708482; grid-column: 2 / 4; border-radius: 5px 0 0 0; }
.rest { height: 36px; }
.rest div { background: #2f2f2f; }
.tmk { position: absolute; right: 4px; top: 2px; border-left: 2px solid #000; color: #c0c0c0; }
.overlay { position: absolute; inset: 9px 0 0; pointer-events: none; }
.overlay > div { position: relative; }
.head { position: absolute; top: 0; bottom: 0; border-left: 2px solid #3a8fe8; margin-left: -1px; }
.head::after { content: ""; position: absolute; left: 0; top: 64px; bottom: 0; width: 12px; background: rgba(255, 255, 255, .08); }
.head svg { position: absolute; left: -8px; top: 18px; }
.tfoot { display: flex; height: 24px; border-top: 2px solid #181818; padding-bottom: 2px; }
.tfl { display: flex; align-items: center; width: 800px; padding-left: 8px; gap: 7px; color: #b0b0b0; }
.toggle { width: 174px; height: 20px; margin-left: 368px; font-size: 14px; color: #8f8f8f; border: solid #1a1a1a; border-width: 0 1px; }
.tfr { display: flex; align-items: center; padding-left: 5px; color: #c0c0c0; }
.knob { width: 13px; height: 13px; margin-left: 15px; border: 2px solid #aaa; border-radius: 50%; }
.rail { width: 66px; height: 2px; background: #3c3c3c; }
.mark1 { position: absolute; left: 1025px; bottom: 68px; font-size: 38px; line-height: 46px; font-weight: 300; color: rgba(25, 25, 25, .55); }
.mark2 { position: absolute; left: 868px; bottom: 12px; display: flex; align-items: center; gap: 10px; font-size: 33px; line-height: 40px; font-weight: 900; color: #8c8c8c; white-space: nowrap; }
</style>
